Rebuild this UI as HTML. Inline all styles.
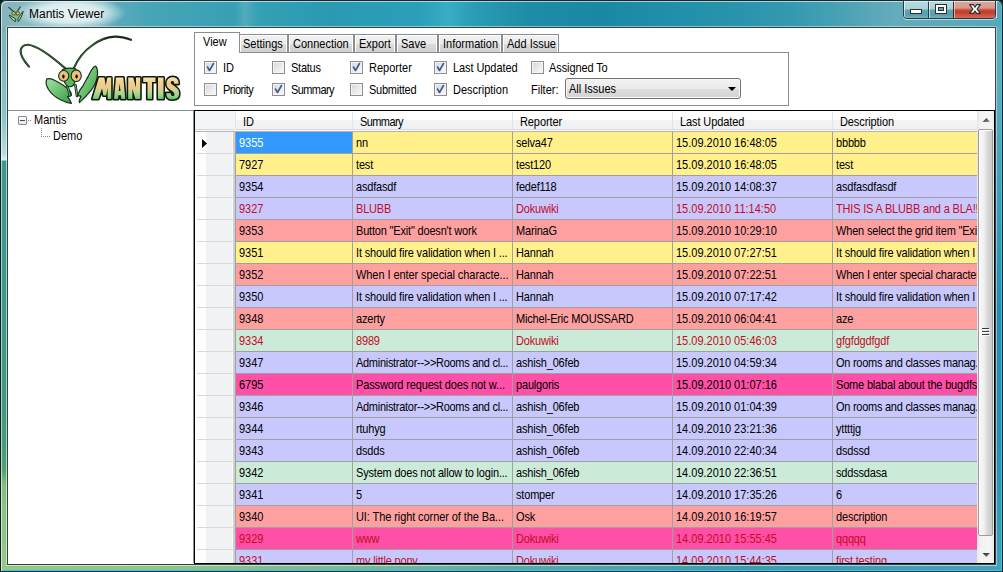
<!DOCTYPE html>
<html><head><meta charset="utf-8">
<style>
*{margin:0;padding:0;box-sizing:content-box}
html,body{width:1003px;height:572px;overflow:hidden;background:#0c1c1e}
#win{position:absolute;left:0;top:0;width:1003px;height:572px;border-radius:6px 6px 0 0;overflow:hidden}
#winborder{position:absolute;left:0;top:0;width:1003px;height:572px;box-sizing:border-box;border:1px solid;border-color:#14282c #0e2a30 #14343a #0c2222;border-radius:6px 6px 0 0;box-shadow:inset 1px 1px 0 rgba(255,255,255,0.6)}
body{position:relative;font-family:"Liberation Sans",sans-serif;font-size:11px;color:#000}
.abs{position:absolute}
#frame{position:absolute;left:0;top:0;width:1003px;height:572px;
 background:linear-gradient(90deg,#86b3bb 0px,#8ab8c0 20px,#80b6c0 100px,#5aaaba 118px,#46a5b7 150px,#38a0b4 235px,#52acbc 245px,#34a0b4 258px,#2a9ab2 330px,#2aa0b8 420px,#38adc4 448px,#2a9cb4 475px,#1e8ca6 530px,#1a88a3 600px,#2090aa 670px,#2792ab 720px,#3399b0 790px,#4ea3b6 850px,#65acbc 895px,#5aa8b9 960px,#58a6b8 1003px)}
#glow{position:absolute;left:14px;top:-4px;width:112px;height:34px;background:radial-gradient(ellipse closest-side at center,rgba(238,247,247,0.95) 0%,rgba(228,242,243,0.9) 55%,rgba(200,230,235,0.5) 80%,rgba(200,230,235,0) 100%)}
#topline{position:absolute;left:3px;top:0;width:997px;height:1px;background:#20383e}
#topline2{position:absolute;left:4px;top:1px;width:995px;height:1px;background:rgba(255,255,255,0.45)}
#lframe{position:absolute;left:0;top:27px;width:7px;height:545px;background:linear-gradient(180deg,#79b3b9 0px,#8fc2c6 90px,#b8dbde 126px,#dcefef 133px,#3d978f 134px,#3c9a8c 270px,#40997e 380px,#4a9c76 420px,#58a070 443px,#84be7e 458px,#8cc282 480px,#98c886 545px)}
#lline0{position:absolute;left:0;top:6px;width:1px;height:566px;background:#0e2a2a}
#lline1{position:absolute;left:1px;top:6px;width:1px;height:566px;background:rgba(255,255,255,0.5)}
#lline6{position:absolute;left:6px;top:27px;width:1px;height:537px;background:rgba(255,255,255,0.55)}
#bframe{position:absolute;left:0;top:564px;width:1003px;height:8px;background:linear-gradient(90deg,#98c886 0px,#93c488 150px,#7ab898 350px,#55a8a8 550px,#3d9cb2 750px,#48a0ba 1003px)}
#bline{position:absolute;left:6px;top:565px;width:991px;height:1px;background:rgba(255,255,255,0.55)}
#bline2{position:absolute;left:3px;top:570px;width:998px;height:1px;background:#30c8ee}
#bline3{position:absolute;left:0;top:571px;width:1003px;height:1px;background:#14343a}
#rframe{position:absolute;left:996px;top:27px;width:7px;height:545px;background:linear-gradient(180deg,#6aaab8 0px,#65a8b8 60px,#4a9eb6 150px,#2a8caa 280px,#2e8eac 420px,#48a0ba 545px)}
#rline{position:absolute;left:996px;top:27px;width:1px;height:538px;background:rgba(255,255,255,0.45)}
#rline2{position:absolute;left:1001px;top:5px;width:1px;height:566px;background:#38c4ea}
#client{position:absolute;left:7px;top:27px;width:987px;height:536px;border:1px solid #2c4446;background:#fff}
#title{position:absolute;left:29px;top:7px;font-size:12px;color:#000}
.tab{position:absolute;top:34px;height:18px;box-sizing:border-box;border:1px solid #898c95;border-bottom:none;background:linear-gradient(180deg,#f2f2f2 0%,#ebebeb 50%,#dddddd 51%,#cfcfcf 100%);box-shadow:inset 1px 1px 0 #fff,inset -1px 0 0 #fff}
.tab span{position:absolute;top:3px;left:0;right:0;text-align:center;font-size:11px;line-height:13px;white-space:nowrap;transform:scaleY(1.12);transform-origin:0 10px}
.cb{position:absolute;width:11px;height:11px;border:1px solid #8f8f8f;background:linear-gradient(135deg,#d6d6d6,#fbfbfb);box-shadow:inset 0 0 0 1px #f4f4f4}
.lbl{position:absolute;font-size:11px;line-height:13px;white-space:nowrap;transform:translateY(1px) scaleY(1.12);transform-origin:0 10px}
#grid{position:absolute;left:194px;top:110px;width:799px;height:452px;border:1px solid #000;background:#fff}
#clip{position:absolute;left:0;top:0;width:977px;height:563px;overflow:hidden}
.c{position:absolute;height:21px;border-bottom:1px solid #a0a0a0;border-right:1px solid #a0a0a0;overflow:hidden;white-space:nowrap}
.c span{position:absolute;left:3px;top:5px;font-size:11px;line-height:13px;transform:scaleY(1.12);transform-origin:0 10px}
.rh{position:absolute;left:195px;width:40px;height:22px;border-right:1px solid #a0a0a0;background:linear-gradient(#d9d9d9,#d9d9d9) 2px 21px/37px 1px no-repeat,linear-gradient(90deg,#fefefe 0,#fefefe 11px,#f1f2f4 11px,#f1f2f4 37px,#fbfbfb 37px,#fbfbfb 38px,#d0d0d0 38px)}
.hd{position:absolute;top:111px;height:18px;background:linear-gradient(180deg,#fff 0,#fff 9px,#f2f3f5 9px,#eff1f3 100%);border-bottom:1px solid #d8d8d8}
.hd span{position:absolute;left:7px;top:5px;font-size:11px;line-height:13px;white-space:nowrap;transform:scaleY(1.12);transform-origin:0 10px}
.hsep{position:absolute;top:112px;width:1px;height:17px;background:#e3e4e7}
</style></head><body>
<div id="win">
<div id="frame"></div>
<div id="glow"></div>
<div id="lframe"></div>
<div id="rframe"></div>
<div id="bframe"></div>
<div id="lline6"></div>
<div id="bline"></div><div id="bline2"></div>
<div id="rline"></div><div id="rline2"></div>
<div class="abs" style="left:7px;top:26px;width:989px;height:1px;background:rgba(255,255,255,0.45)"></div>
<div class="abs" style="left:996px;top:1px;width:1px;height:17px;background:rgba(255,255,255,0.7)"></div>
</div>
<div id="winborder"></div>
<div id="client"></div>
<div id="title">Mantis Viewer</div>

<!-- caption buttons -->
<div class="abs" style="left:903px;top:-1px;width:91px;height:18px;border:1px solid #243c44;border-radius:0 0 4px 4px;overflow:hidden;box-shadow:0 1px 0 rgba(255,255,255,0.55)">
  <div class="abs" style="left:0;top:0;width:24px;height:18px;background:linear-gradient(180deg,#b8dce2 0px,#a8d2da 9px,#62a3b3 10px,#5a9db0 15px,#78b2c0 18px);box-shadow:inset 1px 1px 0 rgba(255,255,255,0.6)"></div>
  <div class="abs" style="left:24px;top:0;width:1px;height:18px;background:#243c44"></div>
  <div class="abs" style="left:25px;top:0;width:24px;height:18px;background:linear-gradient(180deg,#b8dce2 0px,#a8d2da 9px,#62a3b3 10px,#5a9db0 15px,#78b2c0 18px);box-shadow:inset 1px 1px 0 rgba(255,255,255,0.6)"></div>
  <div class="abs" style="left:49px;top:0;width:1px;height:18px;background:#4a2418"></div>
  <div class="abs" style="left:50px;top:0;width:41px;height:18px;background:linear-gradient(180deg,#dcaaa2 0px,#d69a8e 8px,#c84a38 10px,#c43a2a 12px,#d46a58 18px);box-shadow:inset 1px 1px 0 rgba(255,255,255,0.5)"></div>
</div>
<svg class="abs" style="left:900px;top:0" width="100" height="20">
  <rect x="10.5" y="9.5" width="11" height="4" fill="#fff" stroke="#2a2f33" stroke-width="1"/>
  <rect x="35.5" y="4.5" width="11" height="9" fill="none" stroke="#2a2f33" stroke-width="1"/>
  <rect x="37" y="6" width="8" height="6" fill="none" stroke="#fff" stroke-width="2"/>
  <rect x="38.5" y="7.5" width="5" height="3" fill="#5fa2b2" stroke="#2a2f33" stroke-width="1"/>
  <path d="M69.6 4.6 L73.4 4.6 L75 7.2 L76.6 4.6 L80.4 4.6 L77.1 9.1 L80.4 13.4 L76.6 13.4 L75 11 L73.4 13.4 L69.6 13.4 L72.9 9.1 Z" fill="#fdfdfd" stroke="#2a2f33" stroke-width="1.1" stroke-linejoin="round"/>
  <rect x="3" y="0" width="96" height="1" fill="#20383e"/><rect x="4" y="1" width="91" height="1" fill="#ffffff" opacity="0.55"/>
</svg>
<!-- window icon -->
<svg class="abs" style="left:0;top:0" width="30" height="26">
  <path d="M8.4 7.2 L14 11.8 M20.5 6.5 L17.3 11.2" stroke="#1e3a24" stroke-width="1.1" fill="none"/>
  <path d="M14.5 10.8 L18.5 10.8 L18 15.5 L16.5 17 L15 15.5 Z" fill="#5cb85c"/>
  <path d="M9.2 15 C10 17.5 12.5 20.5 15.5 21.6 L15.8 19 C13.5 17.5 11.5 16 9.2 15 Z" fill="#8ed48a" stroke="#173a1a" stroke-width="0.9"/>
  <path d="M23.2 11.2 C22.5 15 20.5 19 18.3 21.6 L17.8 19 C19.5 16 21.5 13 23.2 11.2 Z" fill="#8ed48a" stroke="#173a1a" stroke-width="0.9"/>
  <circle cx="13.6" cy="13.3" r="1.7" fill="#f0b860" stroke="#2a2a10" stroke-width="0.7"/>
  <circle cx="17.8" cy="13.3" r="1.7" fill="#f0b860" stroke="#2a2a10" stroke-width="0.7"/>
</svg>
<!-- logo -->
<svg class="abs" style="left:0;top:0" width="200" height="110" viewBox="0 0 200 110">
 <defs>
  <linearGradient id="mg" gradientUnits="userSpaceOnUse" x1="0" y1="77" x2="0" y2="100">
   <stop offset="0" stop-color="#fbe6bc"/>
   <stop offset="0.2" stop-color="#f4d090"/>
   <stop offset="0.48" stop-color="#ecca8c"/>
   <stop offset="0.68" stop-color="#b0d890"/>
   <stop offset="0.85" stop-color="#88d088"/>
   <stop offset="1" stop-color="#58b058"/>
  </linearGradient>
  <linearGradient id="lg" x1="0" y1="0" x2="1" y2="1">
   <stop offset="0" stop-color="#a8dea0"/>
   <stop offset="0.5" stop-color="#6cc070"/>
   <stop offset="1" stop-color="#3a9a48"/>
  </linearGradient>
 </defs>
 <g fill="none" stroke="#1a2e1a" stroke-linecap="round">
  <path d="M29 66.6 C24 61 20.5 55 20.6 51 C20.8 47 24 44.5 28 44.7 C36 45.5 48 53 65.3 68.4" stroke-width="2.1"/>
  <path d="M73.7 68.4 C77 61 84 51 92 45.5 C99 40 107 37 115 36.6 C121 36.5 126 38 131 39.8" stroke-width="2.1"/>
 </g>
 <g fill="none" stroke="#4a9a4a" stroke-linecap="round" opacity="0.8">
  <path d="M29 66.6 C24 61 20.5 55 20.6 51 C20.8 47 24 44.5 28 44.7 C36 45.5 48 53 65.3 68.4" stroke-width="0.7"/>
  <path d="M73.7 68.4 C77 61 84 51 92 45.5 C99 40 107 37 104 38" stroke-width="0.7"/>
 </g>
 <!-- left foreleg -->
 <path d="M46.8 78.9 C49 78.4 52 78.6 55 80.5 C60 83 64 85.5 67 88 C69.5 90 71.5 92.5 71.4 95.4 L67.6 96.6 C69 98.5 70.6 101 71.4 103.4 C68 103 64.5 101.8 60 99.5 C55 97 51 93.5 48.5 89.5 C46.3 85.8 45.6 81.5 46.8 78.9 Z" fill="url(#lg)" stroke="#14301a" stroke-width="1.2" stroke-linejoin="round"/>
 <!-- neck legs -->
 <path d="M67.4 85.5 L69.8 95.5" stroke="#14301a" stroke-width="2.6" stroke-linecap="round"/>
 <path d="M67.4 85.5 L69.8 95.5" stroke="#5cb860" stroke-width="1" stroke-linecap="round"/>
 <path d="M75.4 85 L77 96" stroke="#14301a" stroke-width="2.6" stroke-linecap="round"/>
 <path d="M75.4 85 L77 96" stroke="#5cb860" stroke-width="1" stroke-linecap="round"/>
 <!-- right foreleg -->
 <path d="M95.5 66 C97 67.5 97.8 71 97.5 75 C97 80 95 85 91.5 89.8 C88.5 93.5 84.5 98 79.4 102.6 C79 101.5 79.3 100.2 79.6 99.4 L81 96.2 L77.8 95.6 C79 91.5 81 88 82.6 86.5 C84.5 82.5 86.5 79.5 88.3 76.1 C89.8 73 91 70.5 92.3 68.8 C93.2 67.5 94.4 66 95.5 66 Z" fill="url(#lg)" stroke="#14301a" stroke-width="1.2" stroke-linejoin="round"/>
 <!-- head -->
 <path d="M62.5 69.8 C66 67.8 72 67.6 75.5 68.8 C78 73 76 81 73.5 85 C71.5 87.3 68 87.3 66.3 85 C63.5 81 60.5 74 62.5 69.8 Z" fill="#5cb860" stroke="#14301a" stroke-width="1.2"/>
 <ellipse cx="63.7" cy="75.9" rx="5.1" ry="5.4" fill="#e9c27c" stroke="#1e2a18" stroke-width="1.1"/>
 <ellipse cx="76.2" cy="75.7" rx="5.1" ry="5.8" fill="#e9c27c" stroke="#1e2a18" stroke-width="1.1"/>
 <ellipse cx="63.4" cy="76.6" rx="1.2" ry="2" fill="#000"/>
 <ellipse cx="76.6" cy="76.6" rx="1.2" ry="2" fill="#000"/>
 <!-- MANTIS -->
 <g fill="url(#mg)" stroke="#101c0a" stroke-width="3.2" stroke-linejoin="round" paint-order="stroke fill" fill-rule="evenodd">
  <path d="M92.5 99 L99 77.5 L104.3 77.5 L105.8 85.5 L107.3 77.5 L111.2 77.5 L111.2 99 L107.6 99 L107.6 88 L106.2 95.5 L103.4 95.5 L102 88.5 L98.3 99 Z"/>
  <path d="M114 99 L116 77.5 L123.3 77.5 L125.3 99 L121.3 99 L120.9 95.3 L118.4 95.3 L118 99 Z M118.8 91 L119.65 83.5 L120.5 91 Z"/>
  <path d="M128.2 99 L128.2 77.5 L133.2 77.5 L136 87.5 L136 77.5 L140.2 77.5 L140.2 99 L135.4 99 L132.4 89 L132.4 99 Z"/>
  <path d="M143.2 77.5 L155.5 77.5 L155.5 82 L152 82 L152 99 L147.5 99 L147.5 82 L143.2 82 Z"/>
  <path d="M158 77.5 L163.5 77.5 L163.5 99 L158 99 Z"/>
  <path d="M178.6 83.8 L174.2 83.8 C174.2 81.8 173.6 81 172.6 81 C171.4 81 170.8 81.7 170.8 82.6 C170.8 83.9 172 84.6 174.6 86.3 C177.9 88.6 179.1 90.2 179.1 93.6 C179.1 97.6 176.6 99.5 172.6 99.5 C168.6 99.5 166.3 97.5 166.3 93.2 L170.8 93.2 C170.8 95.3 171.4 96.1 172.7 96.1 C173.9 96.1 174.4 95.4 174.4 94.4 C174.4 92.9 173.4 92.1 170.6 90.1 C167.6 88.1 166.5 86.6 166.5 83.6 C166.5 79.6 169 77.2 172.6 77.2 C176.6 77.2 178.6 79.4 178.6 83.8 Z"/>
 </g>
</svg>

<!-- tab control -->
<div class="abs" style="left:194px;top:52px;width:593px;height:52px;border:1px solid #898c95;background:#fff"></div>
<div class="tab" style="left:239px;width:49px"><span style="left:3px;right:auto;text-align:left">Settings</span></div>
<div class="tab" style="left:288px;width:66px"><span style="left:4px;right:auto;text-align:left">Connection</span></div>
<div class="tab" style="left:354px;width:42px"><span style="left:4px;right:auto;text-align:left">Export</span></div>
<div class="tab" style="left:396px;width:42px"><span style="left:4px;right:auto;text-align:left">Save</span></div>
<div class="tab" style="left:438px;width:64px"><span style="left:4px;right:auto;text-align:left">Information</span></div>
<div class="tab" style="left:502px;width:57px"><span style="left:4px;right:auto;text-align:left">Add Issue</span></div>
<div class="abs" style="left:194px;top:32px;width:44px;height:20px;border:1px solid #898c95;border-bottom:none;background:#fff"><span class="abs" style="left:8px;top:3px;line-height:13px;transform:scaleY(1.12);transform-origin:0 10px">View</span></div>

<div class="cb" style="left:204px;top:61px"></div><div class="lbl" style="left:223px;top:61px">ID</div>
<div class="cb" style="left:272px;top:61px"></div><div class="lbl" style="left:291px;top:61px;letter-spacing:-0.25px">Status</div>
<div class="cb" style="left:350px;top:61px"></div><div class="lbl" style="left:369px;top:61px">Reporter</div>
<div class="cb" style="left:434px;top:61px"></div><div class="lbl" style="left:453px;top:61px;letter-spacing:-0.08px">Last Updated</div>
<div class="cb" style="left:531px;top:61px"></div><div class="lbl" style="left:549px;top:61px;letter-spacing:-0.1px">Assigned To</div>
<div class="cb" style="left:204px;top:83px"></div><div class="lbl" style="left:223px;top:83px;letter-spacing:-0.5px">Priority</div>
<div class="cb" style="left:272px;top:83px"></div><div class="lbl" style="left:291px;top:83px;letter-spacing:-0.6px">Summary</div>
<div class="cb" style="left:350px;top:83px"></div><div class="lbl" style="left:369px;top:83px;letter-spacing:-0.25px">Submitted</div>
<div class="cb" style="left:434px;top:83px"></div><div class="lbl" style="left:453px;top:83px">Description</div>
<div class="lbl" style="left:531px;top:83px">Filter:</div>
<svg class="abs" style="left:0;top:0" width="1003" height="120">
 <g fill="none" stroke="#3c5a9a" stroke-width="1.6" stroke-linecap="round" stroke-linejoin="round">
  <path d="M207.5 67 L209.5 70.5 L213.5 63.5"/>
  <path d="M353.5 67 L355.5 70.5 L359.5 63.5"/>
  <path d="M437.5 67 L439.5 70.5 L443.5 63.5"/>
  <path d="M275.5 89 L277.5 92.5 L281.5 85.5"/>
  <path d="M437.5 89 L439.5 92.5 L443.5 85.5"/>
 </g>
</svg>
<div class="abs" style="left:565px;top:78px;width:174px;height:19px;border:1px solid #707070;border-radius:3px;background:linear-gradient(180deg,#f3f3f3 0%,#ebebeb 50%,#dedede 51%,#d3d3d3 100%);box-shadow:inset 0 0 0 1px #f8f8f8"><span class="abs" style="left:3px;top:4px;line-height:13px;transform:scaleY(1.12);transform-origin:0 10px">All Issues</span></div>
<svg class="abs" style="left:728px;top:87px" width="9" height="5"><path d="M0 0 H8 L4 4 Z" fill="#000"/></svg>

<!-- tree -->
<div class="abs" style="left:8px;top:110px;width:185px;height:1px;background:#8a8f98"></div>
<div class="abs" style="left:193px;top:110px;width:1px;height:453px;background:#8a8f98"></div>
<div class="abs" style="left:18px;top:116px;width:7px;height:7px;border:1px solid #8a8a8a;border-radius:1px;background:linear-gradient(180deg,#fdfdfd,#e6e6e6)"></div>
<div class="abs" style="left:20px;top:120px;width:5px;height:1px;background:#2c4a8a"></div>
<div class="lbl" style="left:34px;top:113px">Mantis</div>
<div class="lbl" style="left:53px;top:129px">Demo</div>
<svg class="abs" style="left:0;top:110px" width="100" height="40">
 <g fill="#808080">
  <rect x="28" y="10" width="1" height="1"/><rect x="30" y="10" width="1" height="1"/>
  <rect x="41" y="18" width="1" height="1"/><rect x="41" y="20" width="1" height="1"/><rect x="41" y="22" width="1" height="1"/><rect x="41" y="24" width="1" height="1"/><rect x="41" y="26" width="1" height="1"/>
  <rect x="43" y="26" width="1" height="1"/><rect x="45" y="26" width="1" height="1"/><rect x="47" y="26" width="1" height="1"/><rect x="49" y="26" width="1" height="1"/>
 </g>
</svg>

<!-- grid -->
<div id="grid"></div>
<div id="clip">
<div class="hd" style="left:195px;width:40px;background:#f4f5f7"></div>
<div class="hd" style="left:236px;width:117px"><span>ID</span></div>
<div class="hd" style="left:353px;width:160px"><span style="letter-spacing:-0.6px">Summary</span></div>
<div class="hd" style="left:513px;width:160px"><span style="letter-spacing:-0.1px">Reporter</span></div>
<div class="hd" style="left:673px;width:160px"><span style="letter-spacing:-0.1px">Last Updated</span></div>
<div class="hd" style="left:833px;width:160px"><span style="letter-spacing:-0.1px">Description</span></div>
<div class="abs" style="left:195px;top:130px;width:783px;height:1px;background:#fafafa"></div><div class="abs" style="left:195px;top:131px;width:783px;height:1px;background:#b4b4b4"></div>
<div class="hsep" style="left:235px"></div>
<div class="hsep" style="left:352px"></div>
<div class="hsep" style="left:512px"></div>
<div class="hsep" style="left:672px"></div>
<div class="hsep" style="left:832px"></div>
<div class="rh" style="top:132px"></div>
<div class="c" style="top:132px;left:236px;width:116px;background:#3399ff;color:#ffffff"><span>9355</span></div>
<div class="c" style="top:132px;left:353px;width:159px;background:#fff08c;color:#000000"><span style="letter-spacing:-0.18px">nn</span></div>
<div class="c" style="top:132px;left:513px;width:159px;background:#fff08c;color:#000000"><span style="letter-spacing:-0.18px">selva47</span></div>
<div class="c" style="top:132px;left:673px;width:159px;background:#fff08c;color:#000000"><span>15.09.2010 16:48:05</span></div>
<div class="c" style="top:132px;left:833px;width:160px;background:#fff08c;color:#000000"><span style="letter-spacing:-0.18px">bbbbb</span></div>
<div class="rh" style="top:154px"></div>
<div class="c" style="top:154px;left:236px;width:116px;background:#fff08c;color:#000000"><span>7927</span></div>
<div class="c" style="top:154px;left:353px;width:159px;background:#fff08c;color:#000000"><span style="letter-spacing:-0.18px">test</span></div>
<div class="c" style="top:154px;left:513px;width:159px;background:#fff08c;color:#000000"><span style="letter-spacing:-0.18px">test120</span></div>
<div class="c" style="top:154px;left:673px;width:159px;background:#fff08c;color:#000000"><span>15.09.2010 16:48:05</span></div>
<div class="c" style="top:154px;left:833px;width:160px;background:#fff08c;color:#000000"><span style="letter-spacing:-0.18px">test</span></div>
<div class="rh" style="top:176px"></div>
<div class="c" style="top:176px;left:236px;width:116px;background:#c8c8fc;color:#000000"><span>9354</span></div>
<div class="c" style="top:176px;left:353px;width:159px;background:#c8c8fc;color:#000000"><span style="letter-spacing:-0.18px">asdfasdf</span></div>
<div class="c" style="top:176px;left:513px;width:159px;background:#c8c8fc;color:#000000"><span style="letter-spacing:-0.18px">fedef118</span></div>
<div class="c" style="top:176px;left:673px;width:159px;background:#c8c8fc;color:#000000"><span>15.09.2010 14:08:37</span></div>
<div class="c" style="top:176px;left:833px;width:160px;background:#c8c8fc;color:#000000"><span style="letter-spacing:-0.18px">asdfasdfasdf</span></div>
<div class="rh" style="top:198px"></div>
<div class="c" style="top:198px;left:236px;width:116px;background:#c8c8fc;color:#c40c26"><span>9327</span></div>
<div class="c" style="top:198px;left:353px;width:159px;background:#c8c8fc;color:#c40c26"><span style="letter-spacing:-0.18px">BLUBB</span></div>
<div class="c" style="top:198px;left:513px;width:159px;background:#c8c8fc;color:#c40c26"><span style="letter-spacing:-0.18px">Dokuwiki</span></div>
<div class="c" style="top:198px;left:673px;width:159px;background:#c8c8fc;color:#c40c26"><span>15.09.2010 11:14:50</span></div>
<div class="c" style="top:198px;left:833px;width:160px;background:#c8c8fc;color:#c40c26"><span style="letter-spacing:-0.18px">THIS IS A BLUBB and a BLA!!</span></div>
<div class="rh" style="top:220px"></div>
<div class="c" style="top:220px;left:236px;width:116px;background:#ffa0a0;color:#000000"><span>9353</span></div>
<div class="c" style="top:220px;left:353px;width:159px;background:#ffa0a0;color:#000000"><span style="letter-spacing:-0.18px">Button "Exit" doesn't work</span></div>
<div class="c" style="top:220px;left:513px;width:159px;background:#ffa0a0;color:#000000"><span style="letter-spacing:-0.18px">MarinaG</span></div>
<div class="c" style="top:220px;left:673px;width:159px;background:#ffa0a0;color:#000000"><span>15.09.2010 10:29:10</span></div>
<div class="c" style="top:220px;left:833px;width:160px;background:#ffa0a0;color:#000000"><span style="letter-spacing:-0.18px">When select the grid item "Exit"</span></div>
<div class="rh" style="top:242px"></div>
<div class="c" style="top:242px;left:236px;width:116px;background:#fff08c;color:#000000"><span>9351</span></div>
<div class="c" style="top:242px;left:353px;width:159px;background:#fff08c;color:#000000"><span style="letter-spacing:-0.157px">It should fire validation when I ...</span></div>
<div class="c" style="top:242px;left:513px;width:159px;background:#fff08c;color:#000000"><span style="letter-spacing:-0.18px">Hannah</span></div>
<div class="c" style="top:242px;left:673px;width:159px;background:#fff08c;color:#000000"><span>15.09.2010 07:27:51</span></div>
<div class="c" style="top:242px;left:833px;width:160px;background:#fff08c;color:#000000"><span style="letter-spacing:-0.18px">It should fire validation when I</span></div>
<div class="rh" style="top:264px"></div>
<div class="c" style="top:264px;left:236px;width:116px;background:#ffa0a0;color:#000000"><span>9352</span></div>
<div class="c" style="top:264px;left:353px;width:159px;background:#ffa0a0;color:#000000"><span style="letter-spacing:-0.07px">When I enter special characte...</span></div>
<div class="c" style="top:264px;left:513px;width:159px;background:#ffa0a0;color:#000000"><span style="letter-spacing:-0.18px">Hannah</span></div>
<div class="c" style="top:264px;left:673px;width:159px;background:#ffa0a0;color:#000000"><span>15.09.2010 07:22:51</span></div>
<div class="c" style="top:264px;left:833px;width:160px;background:#ffa0a0;color:#000000"><span style="letter-spacing:-0.18px">When I enter special characters</span></div>
<div class="rh" style="top:286px"></div>
<div class="c" style="top:286px;left:236px;width:116px;background:#c8c8fc;color:#000000"><span>9350</span></div>
<div class="c" style="top:286px;left:353px;width:159px;background:#c8c8fc;color:#000000"><span style="letter-spacing:-0.157px">It should fire validation when I ...</span></div>
<div class="c" style="top:286px;left:513px;width:159px;background:#c8c8fc;color:#000000"><span style="letter-spacing:-0.18px">Hannah</span></div>
<div class="c" style="top:286px;left:673px;width:159px;background:#c8c8fc;color:#000000"><span>15.09.2010 07:17:42</span></div>
<div class="c" style="top:286px;left:833px;width:160px;background:#c8c8fc;color:#000000"><span style="letter-spacing:-0.18px">It should fire validation when I</span></div>
<div class="rh" style="top:308px"></div>
<div class="c" style="top:308px;left:236px;width:116px;background:#ffa0a0;color:#000000"><span>9348</span></div>
<div class="c" style="top:308px;left:353px;width:159px;background:#ffa0a0;color:#000000"><span style="letter-spacing:-0.18px">azerty</span></div>
<div class="c" style="top:308px;left:513px;width:159px;background:#ffa0a0;color:#000000"><span style="letter-spacing:-0.18px">Michel-Eric MOUSSARD</span></div>
<div class="c" style="top:308px;left:673px;width:159px;background:#ffa0a0;color:#000000"><span>15.09.2010 06:04:41</span></div>
<div class="c" style="top:308px;left:833px;width:160px;background:#ffa0a0;color:#000000"><span style="letter-spacing:-0.18px">aze</span></div>
<div class="rh" style="top:330px"></div>
<div class="c" style="top:330px;left:236px;width:116px;background:#cbead8;color:#c40c26"><span>9334</span></div>
<div class="c" style="top:330px;left:353px;width:159px;background:#cbead8;color:#c40c26"><span style="letter-spacing:-0.18px">8989</span></div>
<div class="c" style="top:330px;left:513px;width:159px;background:#cbead8;color:#c40c26"><span style="letter-spacing:-0.18px">Dokuwiki</span></div>
<div class="c" style="top:330px;left:673px;width:159px;background:#cbead8;color:#c40c26"><span>15.09.2010 05:46:03</span></div>
<div class="c" style="top:330px;left:833px;width:160px;background:#cbead8;color:#c40c26"><span style="letter-spacing:-0.18px">gfgfdgdfgdf</span></div>
<div class="rh" style="top:352px"></div>
<div class="c" style="top:352px;left:236px;width:116px;background:#c8c8fc;color:#000000"><span>9347</span></div>
<div class="c" style="top:352px;left:353px;width:159px;background:#c8c8fc;color:#000000"><span style="letter-spacing:-0.29px">Administrator--&gt;&gt;Rooms and cl...</span></div>
<div class="c" style="top:352px;left:513px;width:159px;background:#c8c8fc;color:#000000"><span style="letter-spacing:-0.18px">ashish_06feb</span></div>
<div class="c" style="top:352px;left:673px;width:159px;background:#c8c8fc;color:#000000"><span>15.09.2010 04:59:34</span></div>
<div class="c" style="top:352px;left:833px;width:160px;background:#c8c8fc;color:#000000"><span style="letter-spacing:-0.26px">On rooms and classes manag...</span></div>
<div class="rh" style="top:374px"></div>
<div class="c" style="top:374px;left:236px;width:116px;background:#ff4fa6;color:#000000"><span>6795</span></div>
<div class="c" style="top:374px;left:353px;width:159px;background:#ff4fa6;color:#000000"><span style="letter-spacing:-0.134px">Password request does not w...</span></div>
<div class="c" style="top:374px;left:513px;width:159px;background:#ff4fa6;color:#000000"><span style="letter-spacing:-0.18px">paulgoris</span></div>
<div class="c" style="top:374px;left:673px;width:159px;background:#ff4fa6;color:#000000"><span>15.09.2010 01:07:16</span></div>
<div class="c" style="top:374px;left:833px;width:160px;background:#ff4fa6;color:#000000"><span style="letter-spacing:-0.18px">Some blabal about the bugdfsdf</span></div>
<div class="rh" style="top:396px"></div>
<div class="c" style="top:396px;left:236px;width:116px;background:#c8c8fc;color:#000000"><span>9346</span></div>
<div class="c" style="top:396px;left:353px;width:159px;background:#c8c8fc;color:#000000"><span style="letter-spacing:-0.29px">Administrator--&gt;&gt;Rooms and cl...</span></div>
<div class="c" style="top:396px;left:513px;width:159px;background:#c8c8fc;color:#000000"><span style="letter-spacing:-0.18px">ashish_06feb</span></div>
<div class="c" style="top:396px;left:673px;width:159px;background:#c8c8fc;color:#000000"><span>15.09.2010 01:04:39</span></div>
<div class="c" style="top:396px;left:833px;width:160px;background:#c8c8fc;color:#000000"><span style="letter-spacing:-0.26px">On rooms and classes manag...</span></div>
<div class="rh" style="top:418px"></div>
<div class="c" style="top:418px;left:236px;width:116px;background:#c8c8fc;color:#000000"><span>9344</span></div>
<div class="c" style="top:418px;left:353px;width:159px;background:#c8c8fc;color:#000000"><span style="letter-spacing:-0.18px">rtuhyg</span></div>
<div class="c" style="top:418px;left:513px;width:159px;background:#c8c8fc;color:#000000"><span style="letter-spacing:-0.18px">ashish_06feb</span></div>
<div class="c" style="top:418px;left:673px;width:159px;background:#c8c8fc;color:#000000"><span>14.09.2010 23:21:36</span></div>
<div class="c" style="top:418px;left:833px;width:160px;background:#c8c8fc;color:#000000"><span style="letter-spacing:-0.18px">yttttjg</span></div>
<div class="rh" style="top:440px"></div>
<div class="c" style="top:440px;left:236px;width:116px;background:#c8c8fc;color:#000000"><span>9343</span></div>
<div class="c" style="top:440px;left:353px;width:159px;background:#c8c8fc;color:#000000"><span style="letter-spacing:-0.18px">dsdds</span></div>
<div class="c" style="top:440px;left:513px;width:159px;background:#c8c8fc;color:#000000"><span style="letter-spacing:-0.18px">ashish_06feb</span></div>
<div class="c" style="top:440px;left:673px;width:159px;background:#c8c8fc;color:#000000"><span>14.09.2010 22:40:34</span></div>
<div class="c" style="top:440px;left:833px;width:160px;background:#c8c8fc;color:#000000"><span style="letter-spacing:-0.18px">dsdssd</span></div>
<div class="rh" style="top:462px"></div>
<div class="c" style="top:462px;left:236px;width:116px;background:#cbead8;color:#000000"><span>9342</span></div>
<div class="c" style="top:462px;left:353px;width:159px;background:#cbead8;color:#000000"><span style="letter-spacing:-0.19px">System does not allow to login...</span></div>
<div class="c" style="top:462px;left:513px;width:159px;background:#cbead8;color:#000000"><span style="letter-spacing:-0.18px">ashish_06feb</span></div>
<div class="c" style="top:462px;left:673px;width:159px;background:#cbead8;color:#000000"><span>14.09.2010 22:36:51</span></div>
<div class="c" style="top:462px;left:833px;width:160px;background:#cbead8;color:#000000"><span style="letter-spacing:-0.18px">sddssdasa</span></div>
<div class="rh" style="top:484px"></div>
<div class="c" style="top:484px;left:236px;width:116px;background:#c8c8fc;color:#000000"><span>9341</span></div>
<div class="c" style="top:484px;left:353px;width:159px;background:#c8c8fc;color:#000000"><span style="letter-spacing:-0.18px">5</span></div>
<div class="c" style="top:484px;left:513px;width:159px;background:#c8c8fc;color:#000000"><span style="letter-spacing:-0.18px">stomper</span></div>
<div class="c" style="top:484px;left:673px;width:159px;background:#c8c8fc;color:#000000"><span>14.09.2010 17:35:26</span></div>
<div class="c" style="top:484px;left:833px;width:160px;background:#c8c8fc;color:#000000"><span style="letter-spacing:-0.18px">6</span></div>
<div class="rh" style="top:506px"></div>
<div class="c" style="top:506px;left:236px;width:116px;background:#ffa0a0;color:#000000"><span>9340</span></div>
<div class="c" style="top:506px;left:353px;width:159px;background:#ffa0a0;color:#000000"><span style="letter-spacing:-0.09px">UI: The right corner of the Ba...</span></div>
<div class="c" style="top:506px;left:513px;width:159px;background:#ffa0a0;color:#000000"><span style="letter-spacing:-0.18px">Osk</span></div>
<div class="c" style="top:506px;left:673px;width:159px;background:#ffa0a0;color:#000000"><span>14.09.2010 16:19:57</span></div>
<div class="c" style="top:506px;left:833px;width:160px;background:#ffa0a0;color:#000000"><span style="letter-spacing:-0.18px">description</span></div>
<div class="rh" style="top:528px"></div>
<div class="c" style="top:528px;left:236px;width:116px;background:#ff4fa6;color:#c40c26"><span>9329</span></div>
<div class="c" style="top:528px;left:353px;width:159px;background:#ff4fa6;color:#c40c26"><span style="letter-spacing:-0.18px">www</span></div>
<div class="c" style="top:528px;left:513px;width:159px;background:#ff4fa6;color:#c40c26"><span style="letter-spacing:-0.18px">Dokuwiki</span></div>
<div class="c" style="top:528px;left:673px;width:159px;background:#ff4fa6;color:#c40c26"><span>14.09.2010 15:55:45</span></div>
<div class="c" style="top:528px;left:833px;width:160px;background:#ff4fa6;color:#c40c26"><span style="letter-spacing:-0.18px">qqqqq</span></div>
<div class="rh" style="top:550px"></div>
<div class="c" style="top:550px;left:236px;width:116px;background:#c8c8fc;color:#c40c26"><span>9331</span></div>
<div class="c" style="top:550px;left:353px;width:159px;background:#c8c8fc;color:#c40c26"><span style="letter-spacing:-0.18px">my little pony</span></div>
<div class="c" style="top:550px;left:513px;width:159px;background:#c8c8fc;color:#c40c26"><span style="letter-spacing:-0.18px">Dokuwiki</span></div>
<div class="c" style="top:550px;left:673px;width:159px;background:#c8c8fc;color:#c40c26"><span>14.09.2010 15:44:35</span></div>
<div class="c" style="top:550px;left:833px;width:160px;background:#c8c8fc;color:#c40c26"><span style="letter-spacing:-0.18px">first testing</span></div>
</div>
<svg class="abs" style="left:202px;top:139px" width="6" height="10"><path d="M0 0 L5 4.5 L0 9 Z" fill="#000"/></svg>

<!-- scrollbar -->
<div class="abs" style="left:977px;top:111px;width:17px;height:452px;background:linear-gradient(90deg,#e6e6e6 0px,#f2f2f2 3px,#f4f4f4 13px,#ececec 17px)"></div>
<svg class="abs" style="left:977px;top:111px" width="17" height="452">
 <defs><linearGradient id="ag" x1="0" y1="0" x2="1" y2="1"><stop offset="0" stop-color="#1a1a1a"/><stop offset="1" stop-color="#9a9a9a"/></linearGradient></defs>
 <path d="M5.5 11 L9.5 7 L13 11 Z" fill="url(#ag)"/>
 <path d="M5.5 442 L13 442 L9.5 446 Z" fill="url(#ag)"/>
</svg>
<div class="abs" style="left:978px;top:129px;width:13px;height:405px;border:1px solid #9c9c9c;border-radius:2px;background:linear-gradient(90deg,#f8f8f8 0%,#f0f0f0 40%,#dcdcdc 60%,#cacaca 100%);box-shadow:inset 1px 1px 0 #fff"></div>
<svg class="abs" style="left:980px;top:326px" width="12" height="12">
 <g fill="#3c3c3c"><rect x="2" y="2" width="7" height="1"/><rect x="2" y="5" width="7" height="1"/><rect x="2" y="8" width="7" height="1"/></g>
 <g fill="#ffffff" opacity="0.8"><rect x="3" y="3" width="7" height="1"/><rect x="3" y="6" width="7" height="1"/><rect x="3" y="9" width="7" height="1"/></g>
</svg>

</body></html>
